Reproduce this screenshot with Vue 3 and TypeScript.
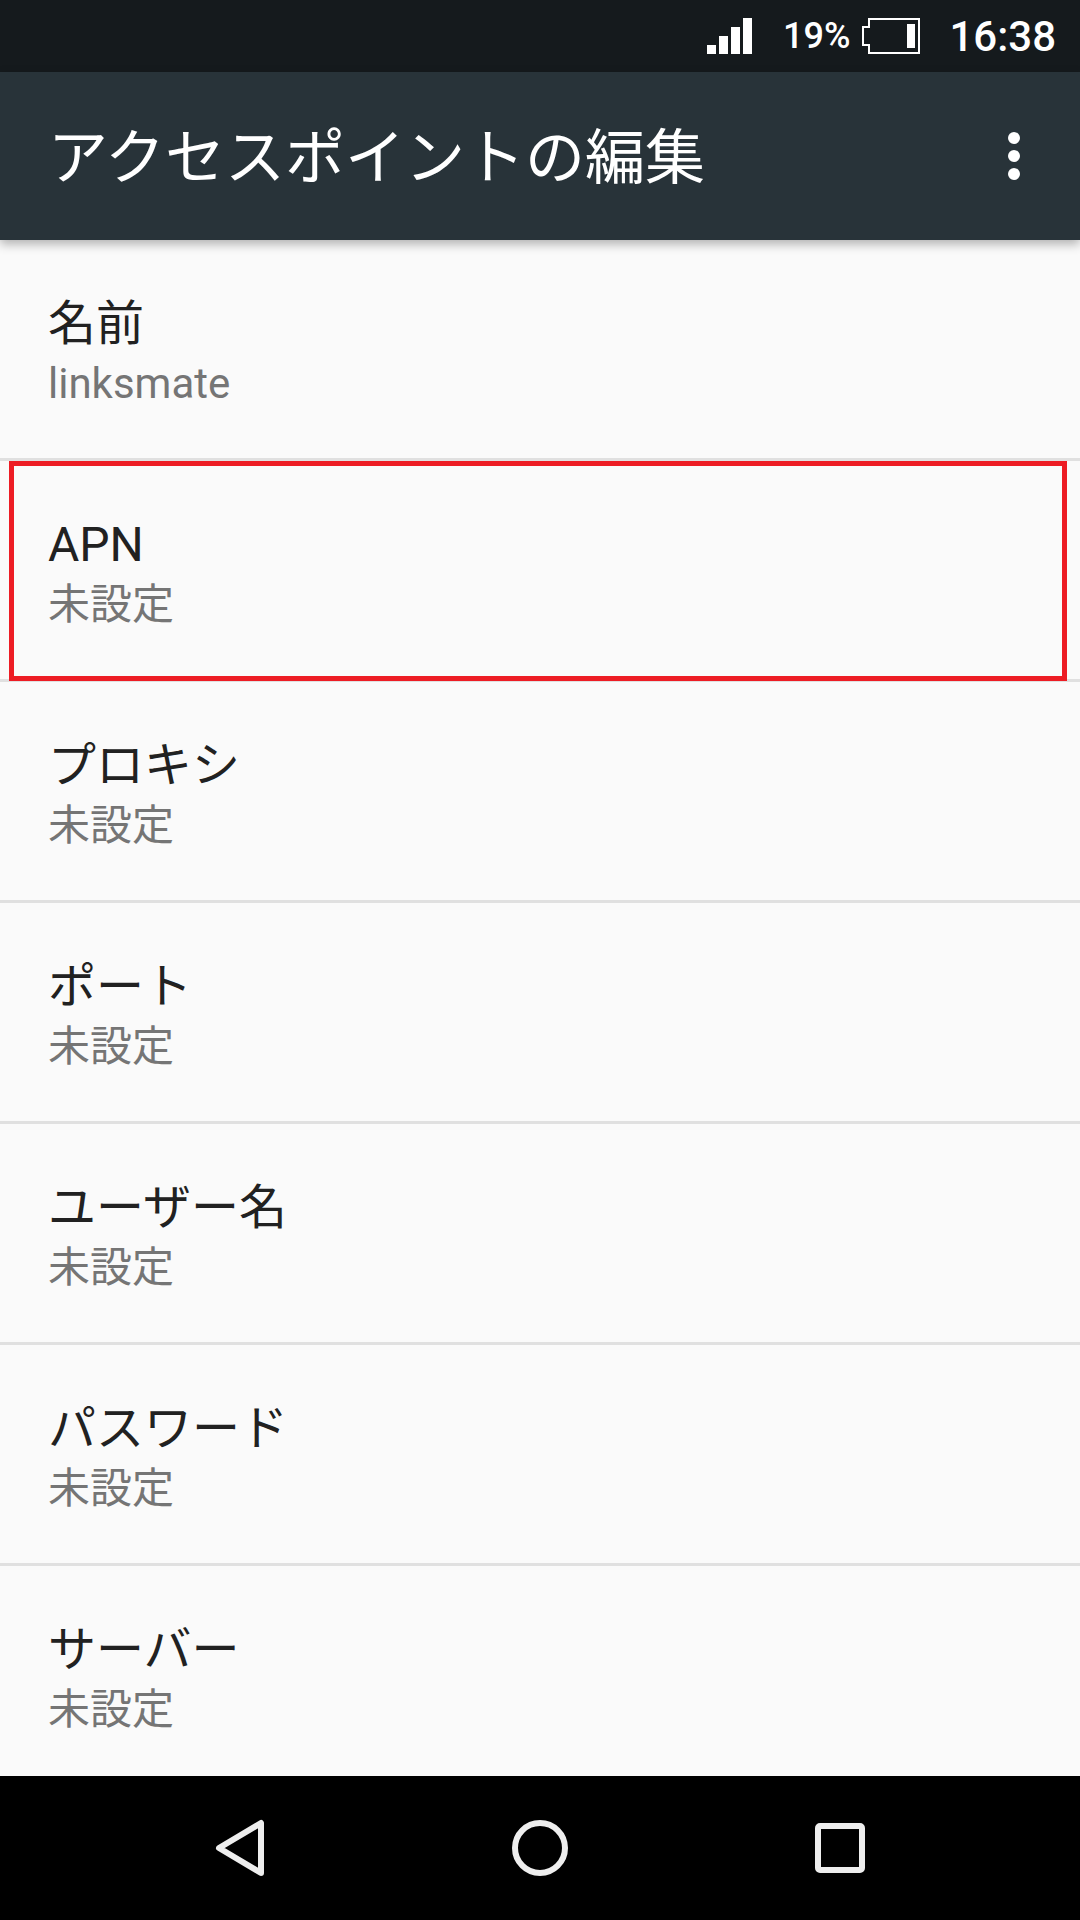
<script setup lang="ts">
interface Row { title: string; value: string; marked?: boolean }
const rows: Row[] = [
  { title: '名前', value: 'linksmate' },
  { title: 'APN', value: '未設定', marked: true },
  { title: 'プロキシ', value: '未設定' },
  { title: 'ポート', value: '未設定' },
  { title: 'ユーザー名', value: '未設定' },
  { title: 'パスワード', value: '未設定' },
  { title: 'サーバー', value: '未設定' },
]
</script>

<template>
  <div class="screen">
    <header class="status">
      <svg class="signal" width="45" height="36" viewBox="0 0 45 36" fill="#fff">
        <rect x="0" y="27" width="9" height="9" />
        <rect x="12" y="18" width="9" height="18" />
        <rect x="24" y="9" width="9" height="27" />
        <rect x="36" y="0" width="9" height="36" />
      </svg>
      <span class="pct">19%</span>
      <svg class="battery" width="58" height="36" viewBox="0 0 58 36">
        <path d="M57 1H7v8H1v18h6v8h50z" fill="none" stroke="#fff" stroke-width="2" />
        <rect x="45" y="6" width="8" height="24" fill="#fff" />
      </svg>
      <span class="time">16:38</span>
    </header>
    <div class="appbar">
      <h1 class="heading">アクセスポイントの編集</h1>
      <svg class="more" width="12" height="48" viewBox="0 0 12 48" fill="#fff">
        <circle cx="6" cy="6" r="6" />
        <circle cx="6" cy="24" r="6" />
        <circle cx="6" cy="42" r="6" />
      </svg>
    </div>
    <main class="list">
      <div v-for="row in rows" :key="row.title" class="row" :class="{ marked: row.marked }">
        <div class="title">{{ row.title }}</div>
        <div class="value">{{ row.value }}</div>
      </div>
    </main>
    <footer class="nav">
      <svg width="56" height="60" viewBox="0 0 56 60" fill="none" stroke="#eee" stroke-width="6" stroke-linejoin="round">
        <path d="M49 5v50L7 30z" />
      </svg>
      <svg width="56" height="56" viewBox="0 0 56 56" fill="none" stroke="#eee" stroke-width="6">
        <circle cx="28" cy="28" r="25" />
      </svg>
      <svg width="50" height="50" viewBox="0 0 50 50" fill="none" stroke="#eee" stroke-width="6" stroke-linejoin="round">
        <rect x="3" y="3" width="44" height="44" rx="2" />
      </svg>
    </footer>
  </div>
</template>

<style>
html, body { margin: 0; background: #fafafa; }
</style>

<style scoped>
.screen {
  width: 1080px;
  height: 1920px;
  display: flex;
  flex-direction: column;
  overflow: hidden;
  background: #fafafa;
  font-family: Roboto, "Noto Sans CJK JP", sans-serif;
}
.status {
  height: 72px;
  flex: none;
  display: flex;
  align-items: center;
  justify-content: flex-end;
  padding-right: 24px;
  background: #151a1d;
  color: #fff;
}
.pct { font-size: 36px; font-weight: 500; margin-left: 31px; }
.battery { margin-left: 12px; }
.time { font-size: 42px; font-weight: 500; margin-left: 29px; }
.appbar {
  height: 168px;
  flex: none;
  display: flex;
  align-items: center;
  justify-content: space-between;
  padding: 0 60px 0 48px;
  background: #283339;
  box-shadow: 0 4px 10px rgba(0, 0, 0, 0.3);
  position: relative;
  z-index: 1;
}
.heading {
  margin: 0;
  padding-top: 5px;
  font-size: 60px;
  font-weight: 400;
  line-height: 1;
  color: #fff;
}
.list { flex: 1; overflow: hidden; }
.row {
  box-sizing: border-box;
  height: 221px;
  padding: 52px 48px 0;
  border-bottom: 3px solid #e0e0e0;
  position: relative;
}
.row.marked::after {
  content: "";
  position: absolute;
  left: 9px;
  right: 13px;
  top: 0;
  bottom: -2px;
  border: 5px solid #ed1c24;
}
.title { font-size: 48px; line-height: 64px; color: #212121; }
.value { font-size: 42px; line-height: 56px; color: #757575; }
.nav {
  height: 144px;
  flex: none;
  display: grid;
  grid-template-columns: repeat(3, 300px);
  justify-content: center;
  align-items: center;
  justify-items: center;
  background: #000;
}
</style>
